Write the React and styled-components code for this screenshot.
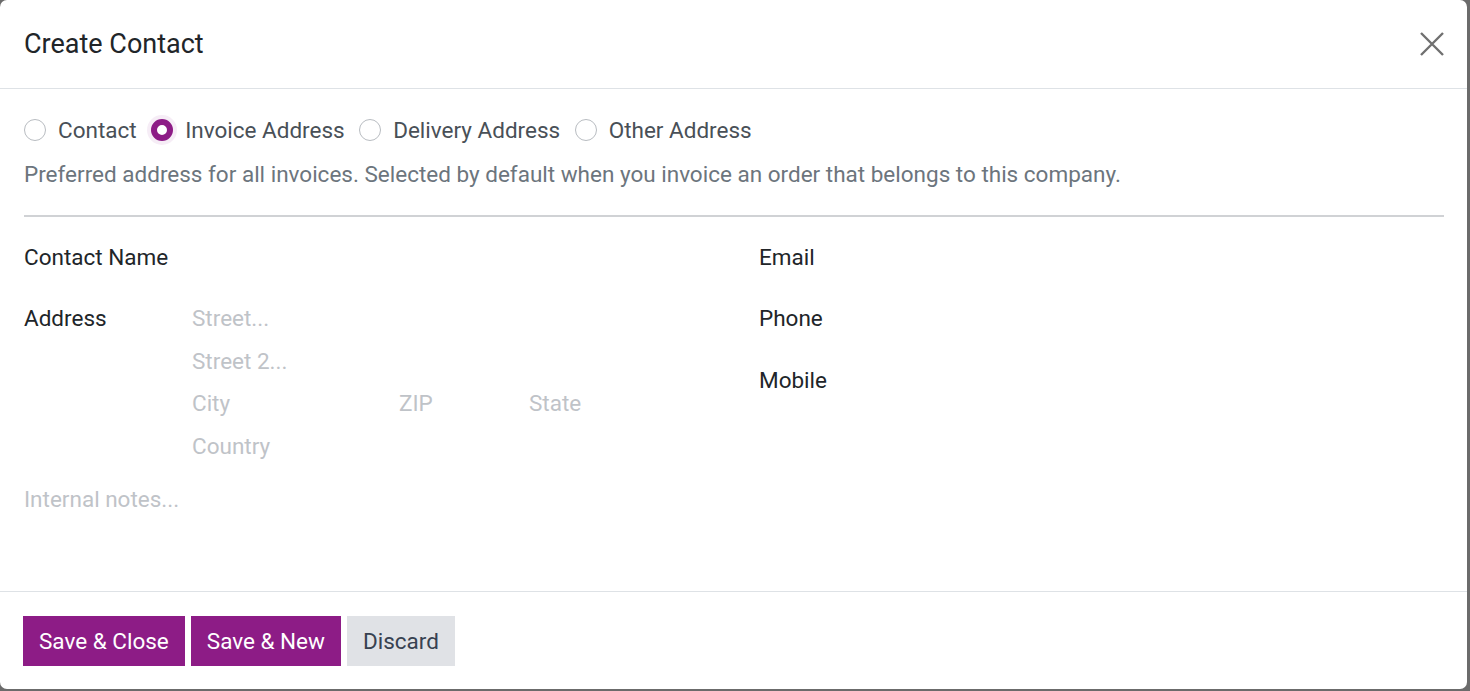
import React from "react";
import styled, { createGlobalStyle } from "styled-components";

const Global = createGlobalStyle`
  html, body { margin: 0; padding: 0; }
  body {
    background: #6b6b6b;
    font-family: Roboto, "Noto Sans", sans-serif;
    overflow: hidden;
  }
`;

const Dialog = styled.div`
  width: 1467px;
  height: 689px;
  background: #fff;
  border-radius: 7px;
  display: flex;
  flex-direction: column;
  box-sizing: border-box;
`;

const Header = styled.header`
  height: 89px;
  border-bottom: 1px solid #dee2e6;
  box-sizing: border-box;
  display: flex;
  align-items: center;
  justify-content: space-between;
  padding: 0 21px 0 24px;
`;

const Title = styled.h1`
  margin: 0;
  font-size: 27px;
  font-weight: 400;
  color: #212529;
`;

const CloseBtn = styled.button`
  border: 0;
  background: none;
  padding: 0;
  width: 28px;
  height: 28px;
  display: flex;
  align-items: center;
  justify-content: center;
  cursor: pointer;
`;

const Body = styled.main`
  flex: 1;
  padding: 26px 23px 0 24px;
  border-bottom: 1px solid #dee2e6;
`;

const RadioRow = styled.div`
  display: flex;
  align-items: center;
  gap: 14.5px;
  height: 30px;
`;

const RadioItem = styled.label`
  display: flex;
  align-items: center;
  gap: 12px;
  font-size: 22.5px;
  color: #495057;
`;

const RadioDot = styled.span`
  width: 22px;
  height: 22px;
  border-radius: 50%;
  box-sizing: border-box;
  border: ${(p) => (p.$checked ? "6px solid #8d1c86" : "1px solid #b8bcc1")};
  background: #fff;
  box-shadow: ${(p) => (p.$checked ? "0 0 0 4px rgba(141, 28, 134, 0.08)" : "none")};
`;

const Hint = styled.p`
  margin: 14px 0 0;
  font-size: 22.5px;
  color: #6c757d;
  line-height: 30px;
`;

const Rule = styled.hr`
  margin: 26px 0 0;
  border: 0;
  border-top: 2px solid #d0d2d5;
`;

const Columns = styled.div`
  display: grid;
  grid-template-columns: 735px 1fr;
  margin-top: 25px;
`;

const Col = styled.div`
  display: flex;
  flex-direction: column;
`;

const Field = styled.div`
  display: grid;
  grid-template-columns: 168px 1fr;
  min-height: ${(p) => p.$h || 61}px;
  align-items: start;
`;

const Label = styled.div`
  font-size: 22.5px;
  color: #212529;
  line-height: 30px;
`;

const AddressBox = styled.div`
  display: flex;
  flex-direction: column;
  gap: 12.5px;
`;

const AddrRow = styled.div`
  display: grid;
  grid-template-columns: 207px 130px 1fr;
`;

const Placeholder = styled.span`
  font-size: 22.5px;
  color: #bfc3c8;
  line-height: 30px;
`;

const Notes = styled.div`
  margin-top: 23px;
`;

const Footer = styled.footer`
  height: 97px;
  display: flex;
  align-items: flex-start;
  gap: 6px;
  padding: 24px 23px 0;
  box-sizing: border-box;
`;

const Button = styled.button`
  height: 50px;
  border: 0;
  padding: 0 16px;
  font-family: Roboto, "Noto Sans", sans-serif;
  font-size: 22.5px;
  background: ${(p) => (p.$primary ? "#8d1c86" : "#e0e2e6")};
  color: ${(p) => (p.$primary ? "#fff" : "#374151")};
  cursor: pointer;
`;

const radios = [
  { label: "Contact" },
  { label: "Invoice Address", checked: true },
  { label: "Delivery Address" },
  { label: "Other Address" },
];

export default function App() {
  return (
    <>
      <Global />
      <Dialog>
        <Header>
          <Title>Create Contact</Title>
          <CloseBtn aria-label="Close">
            <svg width="26" height="26" viewBox="0 0 26 26">
              <path d="M2 2 L24 24 M24 2 L2 24" stroke="#707070" strokeWidth="2.4" />
            </svg>
          </CloseBtn>
        </Header>
        <Body>
          <RadioRow>
            {radios.map((r) => (
              <RadioItem key={r.label}>
                <RadioDot $checked={r.checked} />
                {r.label}
              </RadioItem>
            ))}
          </RadioRow>
          <Hint>
            Preferred address for all invoices. Selected by default when you invoice an order that belongs to this company.
          </Hint>
          <Rule />
          <Columns>
            <Col>
              <Field>
                <Label>Contact Name</Label>
              </Field>
              <Field>
                <Label>Address</Label>
                <AddressBox>
                  <Placeholder>Street...</Placeholder>
                  <Placeholder>Street 2...</Placeholder>
                  <AddrRow>
                    <Placeholder>City</Placeholder>
                    <Placeholder>ZIP</Placeholder>
                    <Placeholder>State</Placeholder>
                  </AddrRow>
                  <Placeholder>Country</Placeholder>
                </AddressBox>
              </Field>
              <Notes>
                <Placeholder>Internal notes...</Placeholder>
              </Notes>
            </Col>
            <Col>
              <Field>
                <Label>Email</Label>
              </Field>
              <Field $h={62}>
                <Label>Phone</Label>
              </Field>
              <Field>
                <Label>Mobile</Label>
              </Field>
            </Col>
          </Columns>
        </Body>
        <Footer>
          <Button $primary>Save &amp; Close</Button>
          <Button $primary>Save &amp; New</Button>
          <Button>Discard</Button>
        </Footer>
      </Dialog>
    </>
  );
}
